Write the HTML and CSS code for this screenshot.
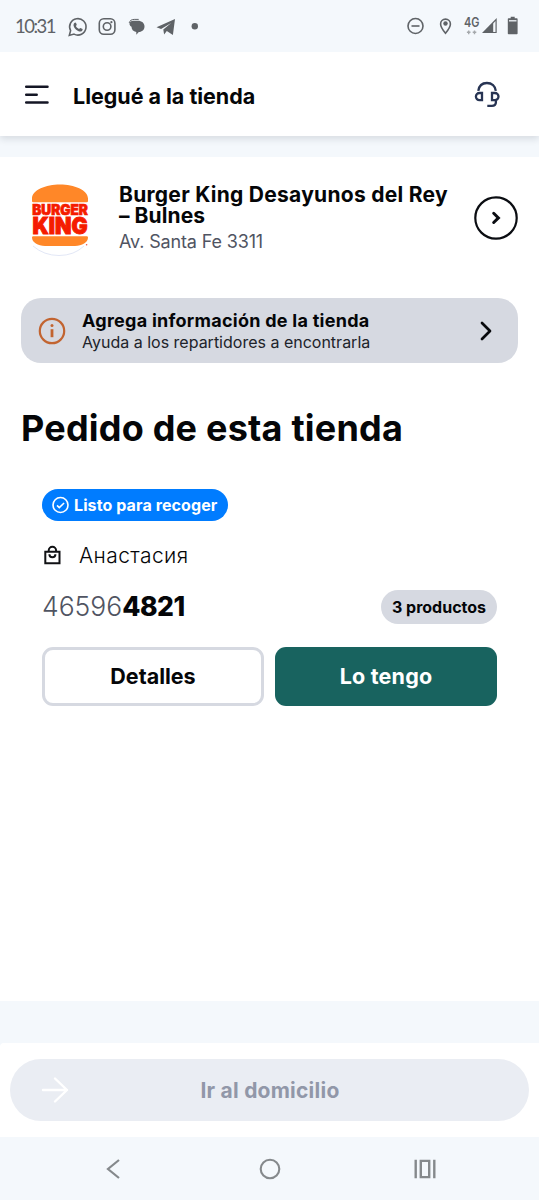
FILE: index.html
```html
<!DOCTYPE html>
<html lang="es">
<head>
<meta charset="utf-8">
<title>Llegué a la tienda</title>
<link rel="stylesheet" href="styles.css">
</head>
<body>
<div class="screen">
  <div class="status">
    <span class="clock">10:31</span>
    <svg class="status-left" width="134" height="20" viewBox="0 0 134 20" fill="none" stroke="#5f6367" stroke-width="1.6">
      <path d="M1.3 18.4l1.3-4.7A8.2 8.2 0 1 1 6 17.1z"/>
      <path d="M6.3 6.1c1.2-1.2 1.8-.4 2.4 1.4.2.7-.8 1.2-.8 1.5.6 1.3 1.700 2.300 3.100 2.900.4 0 .9-1.200 1.500-1l2 1c.5.3 0 2.400-2 2.600-3.200 0-6.700-3.500-7-6.300 0-.9.3-1.600.8-2.100z" fill="#5f6367" stroke="none"/>
      <rect x="31.300" y="1.700" width="15.600" height="15.600" rx="4.500"/><circle cx="39.100" cy="9.500" r="3.800"/><circle cx="43.400" cy="5.200" r="1.100" fill="#5f6367" stroke="none"/>
      <path d="M65 3.700h4.800c4 0 6.700 2.300 6.700 5.700 0 3.300-2.400 5.300-5.700 5.600L68.300 17.700v-2.700c-3.200-.5-4.800-2.600-4.800-5.200-1.800-.9-2.500-2.600-1.700-4.200.5-1 1.900-1.900 3.200-1.900z" fill="#5f6367" stroke="none"/>
      <path d="M61.200 5.900c.6-2.400 2.500-3.500 5-3.500h4.500" stroke-width="1"/>
      <path d="M88.500 10.300L107 2 104.900 18 98.800 14 96.100 17.500 95.300 12.400 103.200 5.900 93.100 11.900z" fill="#5f6367" stroke="none"/>
      <circle cx="126.800" cy="9.200" r="3.200" fill="#5f6367" stroke="none"/>
    </svg>
    <svg class="status-right" width="114" height="20" viewBox="0 0 114 20" fill="none" stroke="#5f6367" stroke-width="1.600">
      <circle cx="8.500" cy="10" r="7.500"/><path d="M4.500 10h8"/>
      <path d="M38.500 17.300c-3.300-4-4.900-6.900-4.900-9.300a4.900 4.900 0 0 1 9.800 0c0 2.400-1.600 5.300-4.900 9.300z"/><circle cx="38.500" cy="7.500" r="2.200" fill="#5f6367" stroke="none"/>
      <text class="network" x="57" y="10.800" textLength="15.500" lengthAdjust="spacingAndGlyphs">4G</text>
      <path d="M61.700 14.400v3.800M59.900 16.300h3.600M67.500 14.400v3.800M65.700 16.300h3.600" stroke="#a5a9ac" stroke-width="1.400"/>
      <path d="M75 17L89.700 2V17z" fill="#5f6367" stroke="none"/><path d="M86.200 7.400l2.300-2.400V15.900h-2.300z" fill="#f4f8fc" stroke="none"/>
      <path d="M103.700.700h4v1.500h2.100q.8 0 .8.800v14.500q0 .8-.8.800h-8.200q-.8 0-.8-.8V3q0-.8.800-.8h2.100z" fill="#5f6367" stroke="none"/><path d="M102 4.800h7.500" stroke="#f4f8fc" stroke-width="1.300"/>
    </svg>
  </div>
  <header class="header">
    <svg width="26" height="20" viewBox="0 0 26 20" fill="none" stroke="#141625" stroke-width="2.500" stroke-linecap="round"><path d="M2.200 1.800H23.500M2.200 9.700H12.700M2.200 17.500H23.500"/></svg>
    <h1 class="title"><span>Llegué a la tienda</span></h1>
    <svg class="support" width="26" height="27" viewBox="0 0 26 27" fill="none" stroke="#273453" stroke-width="2.300"><path d="M4.300 9.800C5 5.100 8 2 12.900 2S21.300 5.200 21.800 9.900M8 12v7.200H5.500a3.600 3.600 0 0 1 0-7.200zM18 12v7.200h2.900a3.600 3.600 0 0 0 0-7.200zM21.900 18.700v2.500q0 3.600-4 3.600h-4.600"/></svg>
  </header>
  <main class="main">
    <section class="store">
      <svg class="logo" width="66" height="78" viewBox="0 0 66 78">
        <path d="M5 67q11 9.500 26 9.500t25-9.500" fill="none" stroke="#e2e7f6"/>
        <path d="M4 22V19.500C4 11 18 5.500 32 5.500S60 11 60 19.500V22q0 1.300-1.300 1.300H5.300Q4 23.300 4 22zM5.300 57.300H58.700Q60 57.300 60 58.600C60 63.500 54 67 47 67H17C10 67 4 63.500 4 58.600q0-1.300 1.300-1.300z" fill="#ff8728"/>
        <text class="burger" x="4.300" y="36.300" textLength="55.500" lengthAdjust="spacingAndGlyphs">BURGER</text>
        <text class="king" x="4.600" y="55.300" textLength="55" lengthAdjust="spacingAndGlyphs">KING</text>
        <circle cx="58.600" cy="65.800" r=".8" fill="#ef5544"/>
      </svg>
      <div class="store-text">
        <h2 class="store-name"><span class="name-a">Burger King Desayunos del Rey</span><br><span class="name-b">– Bulnes</span></h2>
        <p class="address"><span>Av. Santa Fe 3311</span></p>
      </div>
      <svg width="44" height="44" viewBox="0 0 44 44" fill="none" stroke="#0b0d12"><circle cx="22" cy="22" r="20.700" stroke-width="2.200"/><path d="M19.700 17.300l4.700 4.600-4.700 4.600" stroke-width="3" stroke-linecap="round"/></svg>
    </section>
    <section class="notice">
      <svg width="28" height="28" viewBox="0 0 28 28" fill="none" stroke="#c26430" stroke-width="2.200"><circle cx="14" cy="14" r="12.200"/><path d="M14 12.200v8" stroke-width="2.800"/><circle cx="14" cy="8.600" r="1.500" fill="#c26430" stroke="none"/></svg>
      <div class="notice-text">
        <p class="notice-title"><span>Agrega información de la tienda</span></p>
        <p class="notice-sub"><span>Ayuda a los repartidores a encontrarla</span></p>
      </div>
      <svg width="12" height="20" viewBox="0 0 12 20" fill="none" stroke="#090a0d" stroke-width="2.700" stroke-linecap="round" stroke-linejoin="round"><path d="M2 2l8 8-8 8"/></svg>
    </section>
    <h2 class="heading"><span>Pedido de esta tienda</span></h2>
    <section class="order">
      <div class="badge">
        <svg width="18" height="18" viewBox="0 0 18 18" fill="none" stroke="#fff" stroke-width="1.600"><circle cx="8.500" cy="9" r="7.500"/><path d="M5 9.400l2.300 2.200 4.800-4.600"/></svg>
        <span>Listo para recoger</span>
      </div>
      <div class="customer">
        <svg width="20" height="20" viewBox="0 0 20 20" fill="none" stroke="#101114" stroke-width="2"><path d="M3.300 6.700h14.200v11.600H3.300zM6.700 6.500V5.500a3.700 3.700 0 0 1 7.400 0v1M7.400 9.300c0 4 6 4 6 0"/></svg>
        <span>Анастасия</span>
      </div>
      <div class="order-row">
        <p class="number"><span class="prefix">46596</span><span class="code">4821</span></p>
        <span class="count"><span>3 productos</span></span>
      </div>
      <div class="actions">
        <button class="button details"><span>Detalles</span></button>
        <button class="button got"><span>Lo tengo</span></button>
      </div>
    </section>
  </main>
  <footer class="footer">
    <button class="go">
      <svg width="28" height="28" viewBox="0 0 28 28" fill="none" stroke="#fff" stroke-width="2.400" stroke-linecap="round" stroke-linejoin="round"><path d="M2 14h24M14 2.500L26 14 14 25.500"/></svg>
      <span class="go-label">Ir al domicilio</span>
    </button>
  </footer>
  <nav class="nav">
    <svg width="14" height="22" viewBox="0 0 14 22" fill="none" stroke="#85898c" stroke-width="2.200"><path d="M13 2L2 11l11 9"/></svg>
    <svg class="home" width="22" height="22" viewBox="0 0 22 22" fill="none" stroke="#85898c" stroke-width="2.100"><circle cx="11" cy="11" r="9.300"/></svg>
    <svg width="22" height="22" viewBox="0 0 22 22" fill="none" stroke="#85898c" stroke-width="2.400"><path d="M1.700 1.700v18.600M20.300 1.700v18.600M6.800 2.900h8.400v16.200H6.800z"/></svg>
  </nav>
</div>
</body>
</html>
```
FILE: styles.css
```css
* { box-sizing: border-box; }
body { margin: 0; background: #f4f8fc; font-family: Inter, "Noto Sans", sans-serif; color: #050608; }
h1, h2, p { margin: 0; }
svg { display: block; flex: none; }
span { white-space: nowrap; }
button { font: inherit; border: 0; padding: 0; }
.screen { width: 539px; height: 1200px; display: flex; flex-direction: column; overflow: hidden; }
.status { height: 52px; flex: none; display: flex; align-items: center; padding: 0 18px 0 15px; color: #5f6367; }
.clock { width: 53px; font-family: Lato, sans-serif; font-size: 18.500px; line-height: 24px; letter-spacing: -1.500px; }
.status-left { margin-top: 1px; overflow: visible; }
.status-right { margin-left: auto; overflow: visible; }
.network { fill: #5f6367; stroke: none; font: 600 13px Inter, sans-serif; }
.header { height: 84px; flex: none; display: flex; align-items: center; padding: 1px 39px 0 24px; background: #fff; box-shadow: 0 3px 7px rgba(20, 30, 45, .13); clip-path: inset(0 0 -14px 0); }
.title { margin: 3px 0 0 23px; font-size: 21.500px; line-height: 28px; font-weight: 700; letter-spacing: -.020px; }
.support { margin-left: auto; }
.main { height: 844px; flex: none; margin-top: 21px; padding: 21px 21px 0; background: #fff; }
.store { display: flex; align-items: center; height: 79px; padding-left: 7px; }
.store-text { margin-left: 25px; flex: 1; padding-top: 3px; }
.store-name { font-size: 21px; line-height: 21px; font-weight: 700; letter-spacing: .270px; }
.name-b { letter-spacing: .070px; }
.address { margin-top: 4px; font-size: 18px; line-height: 24px; letter-spacing: -.150px; color: #505462; }
.notice { height: 65px; margin-top: 41px; padding: 0 26px 0 17px; display: flex; align-items: center; border-radius: 20px; background: #d6d9e1; }
.notice-text { flex: 1; margin-left: 16px; }
.notice-title { font-size: 18px; line-height: 23px; font-weight: 700; letter-spacing: .260px; }
.notice-sub { font-size: 16px; line-height: 20px; color: #20232a; }
.heading { margin-top: 43px; font-size: 36px; line-height: 44px; font-weight: 700; letter-spacing: .210px; }
.order { padding: 39px 21px 0; }
.badge { width: 186px; height: 32px; padding-left: 10px; display: flex; align-items: center; gap: 4px; border-radius: 16px; background: #007cff; color: #fff; font-size: 16px; font-weight: 700; letter-spacing: .100px; }
.customer { margin-top: 20px; height: 28px; display: flex; align-items: center; gap: 17px; font-size: 21px; font-weight: 300; letter-spacing: .400px; }
.order-row { margin-top: 21px; height: 34px; display: flex; align-items: center; justify-content: space-between; }
.number { font-size: 26.500px; line-height: 34px; margin-top: -2px; }
.prefix { color: #505462; font-weight: 300; letter-spacing: 0; }
.code { font-weight: 800; letter-spacing: -.500px; }
.count { width: 116px; height: 34px; display: flex; align-items: center; justify-content: center; border-radius: 17px; background: #d6d9e1; font-size: 16px; font-weight: 700; letter-spacing: 0; }
.actions { margin-top: 23px; display: grid; grid-template-columns: 1fr 1fr; gap: 11px; }
.button { height: 59px; border-radius: 11px; font-size: 21.500px; font-weight: 700; padding-bottom: 2px; letter-spacing: 0; }
.details { border: 3px solid #d6d9e1; background: #fff; color: #050608; }
.got { background: #18635f; color: #fff; letter-spacing: .200px; }
.footer { height: 94px; flex: none; margin-top: 42px; padding: 16px 10px; background: #fff; border-top-left-radius: 4px; }
.go { width: 100%; height: 62px; display: flex; align-items: center; padding: 0 31px; border-radius: 31px; background: #eaedf3; color: #9197a8; font-size: 21px; font-weight: 700; letter-spacing: .230px; }
.go-label { flex: 1; padding-right: 27px; }
.nav { flex: 1; display: flex; justify-content: space-between; align-items: center; padding: 0 103px 0 106px; }
.home { margin-left: 5px; }
.burger { fill: #f51c00; stroke: #f51c00; stroke-width: .7; font: 900 14.300px Inter, sans-serif; }
.king { fill: #f51c00; stroke: #f51c00; stroke-width: 1px; font: 900 23px Inter, sans-serif; }
```
